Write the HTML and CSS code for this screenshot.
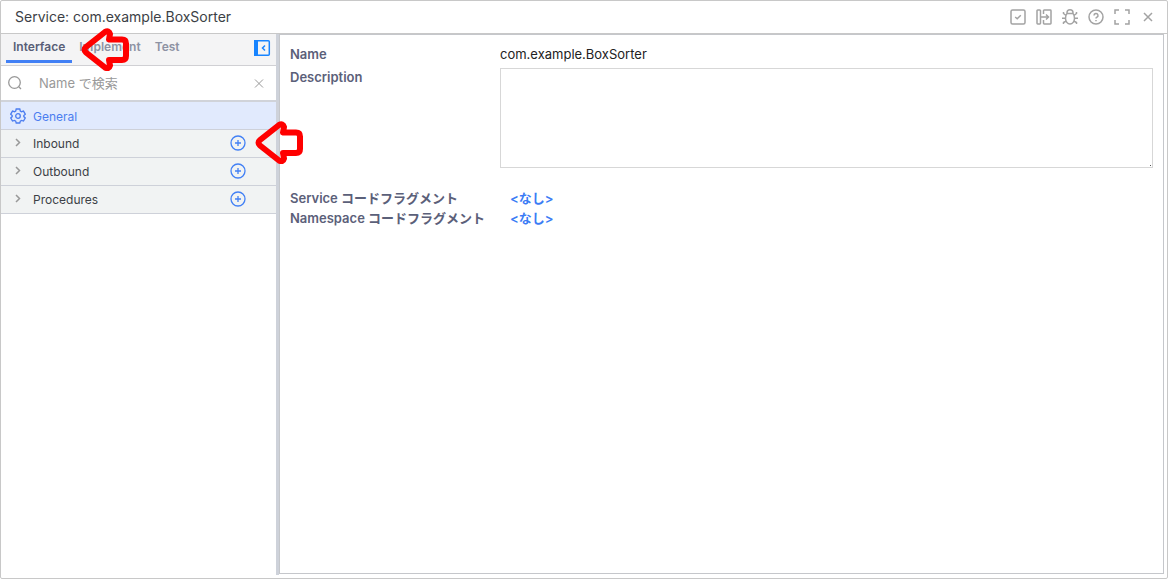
FILE: index.html
```html
<!DOCTYPE html>
<html lang="ja">
<head>
<meta charset="utf-8">
<title>Service: com.example.BoxSorter</title>
<link rel="stylesheet" href="styles.css">
</head>
<body>
<div class="window">
  <header class="titlebar">
    <h1 class="title">Service: com.example.BoxSorter</h1>
    <div class="tools">
      <button class="tool" aria-label="Save"><svg viewBox="0 0 16 16"><rect x="1" y="1" width="14" height="14" rx="1.5"/><path d="M5.200 8l2 1.800 3.600-3.600"/></svg></button>
      <button class="tool" aria-label="Export"><svg viewBox="0 0 16 16"><path d="M4.500 4.500V1.700Q4.500 1 3.800 1H1.700Q1 1 1 1.700v12.600q0 .7.7.7h2.100q.7 0 .7-.7V4.500M7.500 5V1.700q0-.7.7-.7h6.100q.7 0 .7.700v12.600q0 .7-.7.700H8.200q-.7 0-.7-.7V11M4.500 8h8M10 5.500L12.500 8 10 10.500"/></svg></button>
      <button class="tool" aria-label="Debug"><svg viewBox="0 0 16 16"><path d="M5 4.500V3.800a3 3 0 0 1 6 0v.7M5 4.500h6Q12.500 6 12.500 9.500a4.500 5.500 0 0 1-9 0Q3.500 6 5 4.500zM4 6.500L1.500 4.500V3M12 6.500L14.500 4.500V3M3.500 9.300H0M12.500 9.300H16M4.200 12L1.500 13.500V15M11.800 12L14.500 13.500V15"/></svg></button>
      <button class="tool" aria-label="Help"><svg viewBox="0 0 16 16"><circle cx="8" cy="8" r="7"/><path d="M6 6.500a2 2 0 1 1 2.800 1.800Q8 8.600 8 9.600M8 11v1.200"/></svg></button>
      <button class="tool" aria-label="Full screen"><svg viewBox="0 0 16 16"><path d="M1 5V1h4M11 1h4v4M15 11v4h-4M5 15H1v-4"/></svg></button>
      <button class="tool" aria-label="Close"><svg viewBox="0 0 16 16"><path d="M4 4l8 8M12 4l-8 8"/></svg></button>
    </div>
  </header>
  <div class="body">
    <aside class="sidebar">
      <nav class="tabs">
        <button class="tab active">Interface</button>
        <button class="tab">Implement</button>
        <button class="tab">Test</button>
        <button class="collapse" aria-label="Collapse"><svg viewBox="0 0 18 18"><rect x="2" y="1.700" width="14.300" height="14.600" rx="1"/><path class="solid" d="M1 1h4v16H1z"/><path d="M12 6.500L9.500 9l2.500 2.500"/></svg></button>
      </nav>
      <div class="search">
        <svg class="lens" viewBox="0 0 16 16"><circle cx="7.500" cy="7.500" r="5.800"/><path d="M11.800 11.800l2.200 2.200"/></svg>
        <input class="search-input" type="text" aria-label="Name で検索" placeholder="Name で検索">
        <button class="clear" aria-label="Clear"><svg viewBox="0 0 16 16"><path d="M4 4.500l8 8M12 4.500l-8 8"/></svg></button>
      </div>
      <ul class="tree">
        <li class="row selected"><svg class="gear" viewBox="0 0 16 16"><path d="M6.200 1h3.600l.5 2 1.200.7 2-.6 1.800 3.100-1.500 1.400v1l1.500 1.300-1.800 3.100-2-.6-1.200.7-.5 1.900H6.200l-.5-1.900-1.200-.7-2 .6L.7 9.900l1.500-1.300v-1L.7 6.200l1.800-3.100 2 .6 1.200-.7z"/><circle cx="8" cy="8" r="2.300"/></svg><span class="label">General</span></li>
        <li class="row"><svg class="chevron" viewBox="0 0 16 16"><path d="M6 4L9.500 7.500 6 11"/></svg><span class="label">Inbound</span><button class="add" aria-label="Add Inbound"><svg viewBox="0 0 16 16"><circle cx="8" cy="8" r="7"/><path d="M8 5v6M5 8h6"/></svg></button></li>
        <li class="row"><svg class="chevron" viewBox="0 0 16 16"><path d="M6 4L9.500 7.500 6 11"/></svg><span class="label">Outbound</span><button class="add" aria-label="Add Outbound"><svg viewBox="0 0 16 16"><circle cx="8" cy="8" r="7"/><path d="M8 5v6M5 8h6"/></svg></button></li>
        <li class="row"><svg class="chevron" viewBox="0 0 16 16"><path d="M6 4L9.500 7.500 6 11"/></svg><span class="label">Procedures</span><button class="add" aria-label="Add Procedures"><svg viewBox="0 0 16 16"><circle cx="8" cy="8" r="7"/><path d="M8 5v6M5 8h6"/></svg></button></li>
      </ul>
    </aside>
    <div class="splitter"></div>
    <main class="panel">
      <div class="field"><span class="caption">Name</span><span class="value">com.example.BoxSorter</span></div>
      <div class="field"><label class="caption" for="description">Description</label><textarea class="description" id="description"></textarea></div>
      <div class="fragments">
        <div class="fragment"><span class="caption">Service コードフラグメント</span><a class="link" href="#">&lt;なし&gt;</a></div>
        <div class="fragment"><span class="caption">Namespace コードフラグメント</span><a class="link" href="#">&lt;なし&gt;</a></div>
      </div>
    </main>
  </div>
  <svg class="pointer pointer-tab" viewBox="0 0 50 44"><path d="M6 20L25 5Q29 3 30 7L29 12.500H42Q46 12.500 46 16.500V29Q46 33 42 33H29L30 38.500Q29 42.500 25 40.500L6 25.500Q3 22.500 6 20Z"/></svg>
  <svg class="pointer pointer-add" viewBox="0 0 50 44"><path d="M6 20L25 5Q29 3 30 7L29 12.500H42Q46 12.500 46 16.500V29Q46 33 42 33H29L30 38.500Q29 42.500 25 40.500L6 25.500Q3 22.500 6 20Z"/></svg>
</div>
</body>
</html>
```

FILE: styles.css
```css
* { box-sizing: border-box; }
body {
  margin: 0;
  font-family: Inter, "Liberation Sans", "Noto Sans CJK JP", sans-serif;
  font-size: 13px;
  color: #3c3f46;
  background: #fff;
}
button {
  padding: 0;
  border: 0;
  background: none;
  font: inherit;
  color: inherit;
}
svg {
  display: block;
  width: 16px;
  height: 16px;
  fill: none;
  stroke: currentColor;
}
.window {
  position: relative;
  display: flex;
  flex-direction: column;
  height: 100vh;
  border: 1px solid #c8c8c8;
  border-radius: 2px;
}
.titlebar {
  display: flex;
  align-items: center;
  justify-content: space-between;
  height: 33px;
  padding: 0 11px 0 14px;
  border-bottom: 1px solid #c8c8c8;
}
.title { margin: 0; padding-bottom: 2px; font-size: 14px; font-weight: 400; }
.tools { display: flex; gap: 10px; color: #a3a3a3; }
.tool svg { stroke-width: 1.500; }
.body { display: flex; flex: 1; min-height: 0; padding: 0 3px 4px 0; }
.sidebar { width: 275px; }
.tabs {
  display: flex;
  height: 32px;
  padding: 0 5px;
  border-bottom: 1px solid #d0d0d4;
  background: #f4f4f5;
}
.tab {
  height: 29px;
  padding: 0 7px 1px;
  border-bottom: 3px solid transparent;
  font-size: 12px;
  font-weight: 600;
  color: #8d92a3;
}
.tab.active { color: #585e77; border-color: #4280f5; }
.collapse { margin-left: auto; height: 28px; color: #1784ff; }
.collapse svg { width: 18px; height: 18px; stroke-width: 1.500; }
.collapse .solid { fill: currentColor; stroke: none; }
.search {
  display: flex;
  align-items: center;
  height: 36px;
  padding: 0 9px 0 6px;
  border-bottom: 2px solid #d0d3d9;
  color: #999;
}
.search-input {
  flex: 1;
  min-width: 0;
  margin-left: 16px;
  padding: 0;
  border: 0;
  outline: 0;
  font: inherit;
}
.search-input::placeholder { color: #999; }
.lens { stroke-width: 1.300; }
.tree { margin: 0; padding: 0; list-style: none; font-size: 12px; }
.row {
  display: flex;
  align-items: center;
  height: 28px;
  padding: 0 30px 1px 9px;
  border-bottom: 1px solid #ced1d9;
  background: #f1f3f3;
}
.row.selected { padding-bottom: 0; background: #e1eafd; color: #4b7df0; }
.label { margin-left: 7px; }
.row.selected .label { padding-top: 2px; }
.gear { stroke-width: 1.300; }
.chevron { color: #999; stroke-width: 1.500; }
.add { margin-left: auto; color: #4280f5; }
.add svg { stroke-width: 1.300; }
.splitter { width: 3px; background: #ced2da; margin-bottom: -1px; }
.panel {
  flex: 1;
  min-width: 0;
  padding: 9px 10px 10px;
  border: 1px solid #c5c7cb;
}
.field { display: flex; align-items: flex-start; line-height: 20px; margin-bottom: 3px; }
.caption { width: 210px; font-weight: 600; color: #5b6079; }
.value { color: #222; }
.description {
  flex: 1;
  height: 100px;
  margin-top: 1px;
  padding: 4px;
  border: 1px solid #d7d7d7;
  outline: 0;
  resize: none;
  background: linear-gradient(#555, #555) right 1px bottom 1px / 1px 1px no-repeat;
  font: inherit;
}
.fragments { margin-top: 20px; line-height: 20px; }
.fragment { display: flex; }
.fragment .caption { width: 220px; }
.link { color: #3b7cf5; font-weight: 600; text-decoration: none; }
.pointer {
  position: absolute;
  width: 50px;
  height: 44px;
  stroke: #f00;
  stroke-width: 6px;
  stroke-linejoin: round;
  pointer-events: none;
}
.pointer-tab { left: 79px; top: 26px; }
.pointer-add { left: 253px; top: 119px; }
```
